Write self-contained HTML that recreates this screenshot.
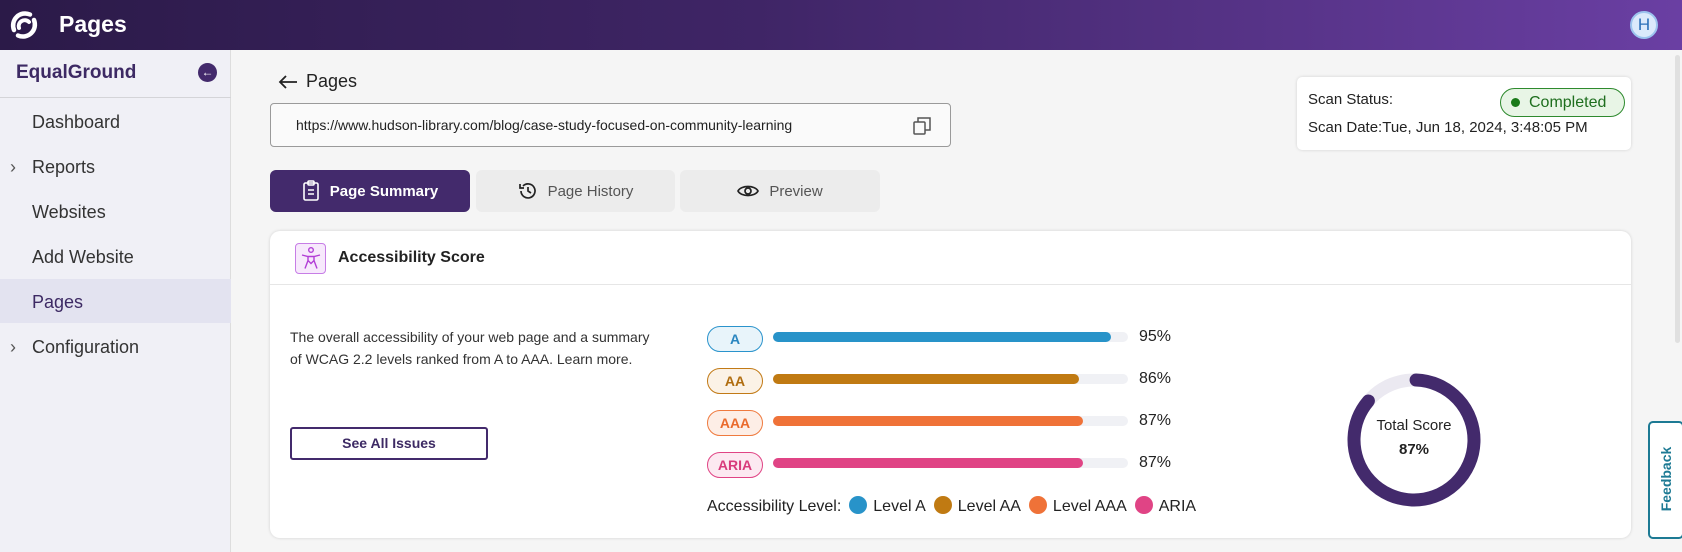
<!DOCTYPE html>
<html><head><meta charset="utf-8"><style>
*{box-sizing:border-box;margin:0;padding:0}
body{width:1682px;height:552px;overflow:hidden;font-family:"Liberation Sans",sans-serif;background:#f5f5f5;position:relative;color:#222}
.abs{position:absolute}
.hdr{left:0;top:0;width:1682px;height:50px;background:linear-gradient(90deg,#2b1a48 0%,#3f2566 45%,#6a3fa3 100%)}
.side{left:0;top:50px;width:231px;height:502px;background:#f0f0f6;border-right:1px solid #ddd}
.nav{position:absolute;left:32px;font-size:18px;color:#333}
.card{background:#fff;border-radius:10px;box-shadow:0 0 3px rgba(0,0,0,.15)}
.badge{position:absolute;left:707px;width:56px;height:26px;border-radius:13px;border:1px solid;text-align:center;font-size:14px;line-height:24px;font-weight:bold}
.track{position:absolute;left:773px;width:355px;height:10px;border-radius:5px;background:#f0f1f5}
.fill{height:10px;border-radius:5px}
.pct{position:absolute;left:1139px;font-size:16px}
.tab{position:absolute;top:170px;height:42px;border-radius:6px;font-size:15px;display:flex;align-items:center;justify-content:center;gap:10px}
.dot{display:inline-block;width:18px;height:18px;border-radius:50%;vertical-align:-3px;margin:0 6px 0 8px}
</style></head><body>
<div class="abs hdr"></div>
<svg class="abs" style="left:9px;top:10px" width="30" height="30" viewBox="0 0 30 30" fill="none" stroke="#fff" stroke-linecap="round"><path d="M21 4.5 A12 12 0 0 0 5 20" stroke-width="4.5"/><path d="M9 25.5 A12 12 0 0 0 25 10" stroke-width="4.5"/><path d="M10 18 A6 6 0 0 1 20 12" stroke-width="4"/></svg>
<div class="abs" style="left:59px;top:11px;color:#fff;font-size:23px;font-weight:bold">Pages</div>
<div class="abs" style="left:1630px;top:11px;width:28px;height:28px;border-radius:50%;background:#dbe9fb;border:2px solid #9cc3ee;color:#2a6fb8;font-size:17px;text-align:center;line-height:24px">H</div>

<div class="abs side"></div>
<div class="abs" style="left:16px;top:62px;font-size:19px;font-weight:bold;color:#3d2a64">EqualGround</div>
<div class="abs" style="left:198px;top:63px;width:19px;height:19px;border-radius:50%;background:#432a6c;color:#fff;font-size:12px;text-align:center;line-height:19px">&#8592;</div>
<div class="abs" style="left:0;top:97px;width:231px;height:1px;background:#d4d4d8"></div>
<div class="nav" style="top:112px">Dashboard</div>
<div class="abs" style="left:10px;top:157px;font-size:18px;color:#555">&#8250;</div>
<div class="nav" style="top:157px">Reports</div>
<div class="nav" style="top:202px">Websites</div>
<div class="nav" style="top:247px">Add Website</div>
<div class="abs" style="left:0;top:279px;width:231px;height:44px;background:#e3e3f0"></div>
<div class="nav" style="top:292px;color:#3d2a64">Pages</div>
<div class="abs" style="left:10px;top:337px;font-size:18px;color:#555">&#8250;</div>
<div class="nav" style="top:337px">Configuration</div>

<svg class="abs" style="left:278px;top:74px" width="20" height="16" viewBox="0 0 20 16" fill="none" stroke="#222" stroke-width="1.8"><path d="M19 8H2M8 2L2 8l6 6"/></svg>
<div class="abs" style="left:306px;top:71px;font-size:18px;color:#222">Pages</div>
<div class="abs" style="left:270px;top:103px;width:681px;height:44px;border:1px solid #9a9a9a;border-radius:4px;background:#fafafa;font-size:14px;padding:13px 0 0 25px">https://www.hudson-library.com/blog/case-study-focused-on-community-learning
<svg class="abs" style="left:641px;top:12px" width="20" height="20" viewBox="0 0 20 20" fill="none" stroke="#555" stroke-width="1.5"><rect x="2" y="6" width="11" height="12" rx="1"/><path d="M6 6V2h12v12h-5"/></svg></div>

<div class="abs card" style="left:1297px;top:77px;width:334px;height:73px;border-radius:5px"></div>
<div class="abs" style="left:1308px;top:91px;font-size:15px">Scan Status:</div>
<div class="abs" style="left:1500px;top:88px;width:125px;height:29px;border:1px solid #2e8a2e;border-radius:15px;background:#e8f5e6;color:#1e6e1e;font-size:16px;line-height:27px;padding-left:10px"><span style="display:inline-block;width:9px;height:9px;border-radius:50%;background:#1a7a1a;margin-right:9px"></span>Completed</div>
<div class="abs" style="left:1308px;top:119px;font-size:15px">Scan Date:Tue, Jun 18, 2024, 3:48:05 PM</div>

<div class="tab" style="left:270px;width:200px;background:#432a6c;color:#fff;font-weight:bold"><svg width="18" height="22" viewBox="0 0 18 22" fill="none" stroke="#fff" stroke-width="1.6"><rect x="2" y="3" width="14" height="17" rx="1.5"/><rect x="6" y="1" width="6" height="4" rx="1"/><path d="M6 10h6M6 14h6"/></svg>Page Summary</div>
<div class="tab" style="left:476px;width:199px;background:#ececec;color:#555"><svg width="20" height="20" viewBox="0 0 20 20" fill="none" stroke="#222" stroke-width="1.7"><path d="M3 10a7 7 0 1 0 2-5"/><path d="M2 3v4h4"/><path d="M10 6v4l3 2"/></svg>Page History</div>
<div class="tab" style="left:680px;width:200px;background:#ececec;color:#555"><svg width="22" height="16" viewBox="0 0 22 16" fill="none" stroke="#222" stroke-width="1.7"><path d="M1 8C4 2 18 2 21 8C18 14 4 14 1 8Z"/><circle cx="11" cy="8" r="3"/></svg>Preview</div>

<div class="abs card" style="left:270px;top:231px;width:1361px;height:307px"></div>
<div class="abs" style="left:270px;top:284px;width:1361px;height:1px;background:#e6e6e6"></div>
<div class="abs" style="left:295px;top:243px;width:31px;height:31px;border:1px solid #c77de6;border-radius:4px;background:#f7e9fc"></div>
<svg class="abs" style="left:299px;top:246px" width="24" height="25" viewBox="0 0 24 25" fill="none" stroke="#b23ed6" stroke-width="1.4"><circle cx="12" cy="4" r="2.3"/><path d="M3 9l6 1.5h6L21 9M9 10.5v4l-3 8M15 10.5v4l3 8M9 14.5l3 3 3-3"/></svg>
<div class="abs" style="left:338px;top:249px;font-size:16px;font-weight:bold">Accessibility Score</div>

<div class="abs" style="left:290px;top:326px;font-size:14px;line-height:22px;color:#333">The overall accessibility of your web page and a summary<br>of WCAG 2.2 levels ranked from A to AAA. Learn more.</div>
<div class="abs" style="left:290px;top:427px;width:198px;height:33px;border:2px solid #432a6c;border-radius:3px;text-align:center;line-height:29px;font-size:14px;font-weight:bold;color:#3d2a64">See All Issues</div>

<div class="badge" style="top:326px;border-color:#2a93cc;background:#e8f4fa;color:#2a86c0">A</div>
<div class="badge" style="top:368px;border-color:#c27a16;background:#fbf2e6;color:#b06d10">AA</div>
<div class="badge" style="top:410px;border-color:#ef7a3e;background:#fdeee6;color:#ea6a2c">AAA</div>
<div class="badge" style="top:452px;border-color:#e04485;background:#fce9f1;color:#d83a7c">ARIA</div>
<div class="track" style="top:332px"><div class="fill" style="width:338px;background:#2893c9"></div></div>
<div class="track" style="top:374px"><div class="fill" style="width:306px;background:#c07a12"></div></div>
<div class="track" style="top:416px"><div class="fill" style="width:310px;background:#ef7238"></div></div>
<div class="track" style="top:458px"><div class="fill" style="width:310px;background:#e04485"></div></div>
<div class="pct" style="top:328px">95%</div>
<div class="pct" style="top:370px">86%</div>
<div class="pct" style="top:412px">87%</div>
<div class="pct" style="top:454px">87%</div>
<div class="abs" style="left:707px;top:496px;font-size:16px">Accessibility Level:<span class="dot" style="background:#2893c9"></span>Level A<span class="dot" style="background:#c07a12"></span>Level AA<span class="dot" style="background:#ef7238"></span>Level AAA<span class="dot" style="background:#e04485"></span>ARIA</div>

<svg class="abs" style="left:1344px;top:370px" width="140" height="140" viewBox="0 0 140 140"><circle cx="70" cy="70" r="60" fill="none" stroke="#ebe9f1" stroke-width="13"/><circle cx="70" cy="70" r="60" fill="none" stroke="#432a6c" stroke-width="13" stroke-linecap="round" stroke-dasharray="323 377" transform="rotate(-88 70 70)"/></svg>
<div class="abs" style="left:1344px;top:417px;width:140px;text-align:center;font-size:15px">Total Score</div>
<div class="abs" style="left:1344px;top:441px;width:140px;text-align:center;font-size:15px;font-weight:bold">87%</div>

<div class="abs" style="left:1648px;top:421px;width:36px;height:118px;border:2px solid #1d7a94;border-radius:5px;background:#fff"></div>
<div class="abs" style="left:1611px;top:471px;width:110px;text-align:center;transform:rotate(-90deg);font-size:14px;font-weight:bold;color:#1d7a94">Feedback</div>
<div class="abs" style="left:1675px;top:55px;width:5px;height:288px;border-radius:3px;background:#e0e0e0"></div>
</body></html>
